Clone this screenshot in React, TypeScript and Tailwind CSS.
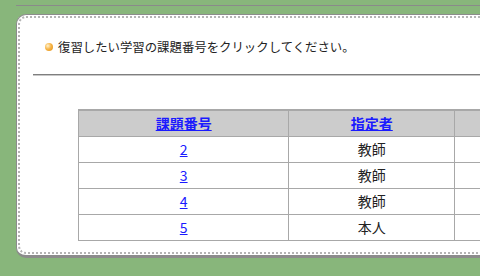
import React from "react";

const rows = [
  { no: "2", who: "教師" },
  { no: "3", who: "教師" },
  { no: "4", who: "教師" },
  { no: "5", who: "本人" },
];

const font = {
  fontFamily: '"Noto Sans CJK JP", "Liberation Sans", sans-serif',
};

export default function App() {
  return (
    <div
      className="w-[480px] h-[276px] overflow-hidden bg-[#88b67b] pt-[5px] text-[12px] text-[#222]"
      style={font}
    >
      {/* thin top rule */}
      <div className="ml-[16px] h-px bg-[#8a8a8a]" />

      {/* panel */}
      <div className="mt-[8px] ml-[16px] w-[520px] h-[244px] rounded-l-[10px] border border-b-[3px] border-[#8c8c8c] bg-white p-px">
        <div className="h-full rounded-l-[8px] border-2 border-r-0 border-dotted border-[#b4b4b4] bg-white">
          {/* intro line */}
          <div className="flex items-center pl-[25px] pt-[22px] leading-[14px]">
            <span className="mr-[5px] inline-block h-[8px] w-[8px] rounded-full bg-[radial-gradient(circle_at_35%_35%,#fff3d0_0,#f7b649_45%,#e08a10_100%)]" />
            <span className="text-[12.4px]">復習したい学習の課題番号をクリックしてください。</span>
          </div>

          {/* rule */}
          <div className="ml-[13px] mt-[20px]">
            <div className="h-px bg-[#7f7f7f]" />
            <div className="h-px bg-[#c8c8c8]" />
          </div>

          {/* table */}
          <table className="ml-[58px] mt-[33px] border-collapse border-t-2 border-l border-[#a8a8a8] text-[14px] leading-[18px]">
            <thead>
              <tr className="h-[26px] bg-[#cccccc]">
                <th className="w-[212px] border-r border-b border-[#a8a8a8] font-bold">
                  <a className="text-[#1a1aff] underline">課題番号</a>
                </th>
                <th className="w-[167px] border-r border-b border-[#a8a8a8] font-bold">
                  <a className="text-[#1a1aff] underline">指定者</a>
                </th>
                <th className="w-[80px] border-b border-[#a8a8a8]" />
              </tr>
            </thead>
            <tbody>
              {rows.map((r) => (
                <tr key={r.no} className="h-[26px]">
                  <td className="border-r border-b border-[#a8a8a8] text-center">
                    <a className="text-[#1a1aff] underline">{r.no}</a>
                  </td>
                  <td className="border-r border-b border-[#a8a8a8] text-center">
                    {r.who}
                  </td>
                  <td className="border-b border-[#a8a8a8]" />
                </tr>
              ))}
            </tbody>
          </table>
        </div>
      </div>
    </div>
  );
}
